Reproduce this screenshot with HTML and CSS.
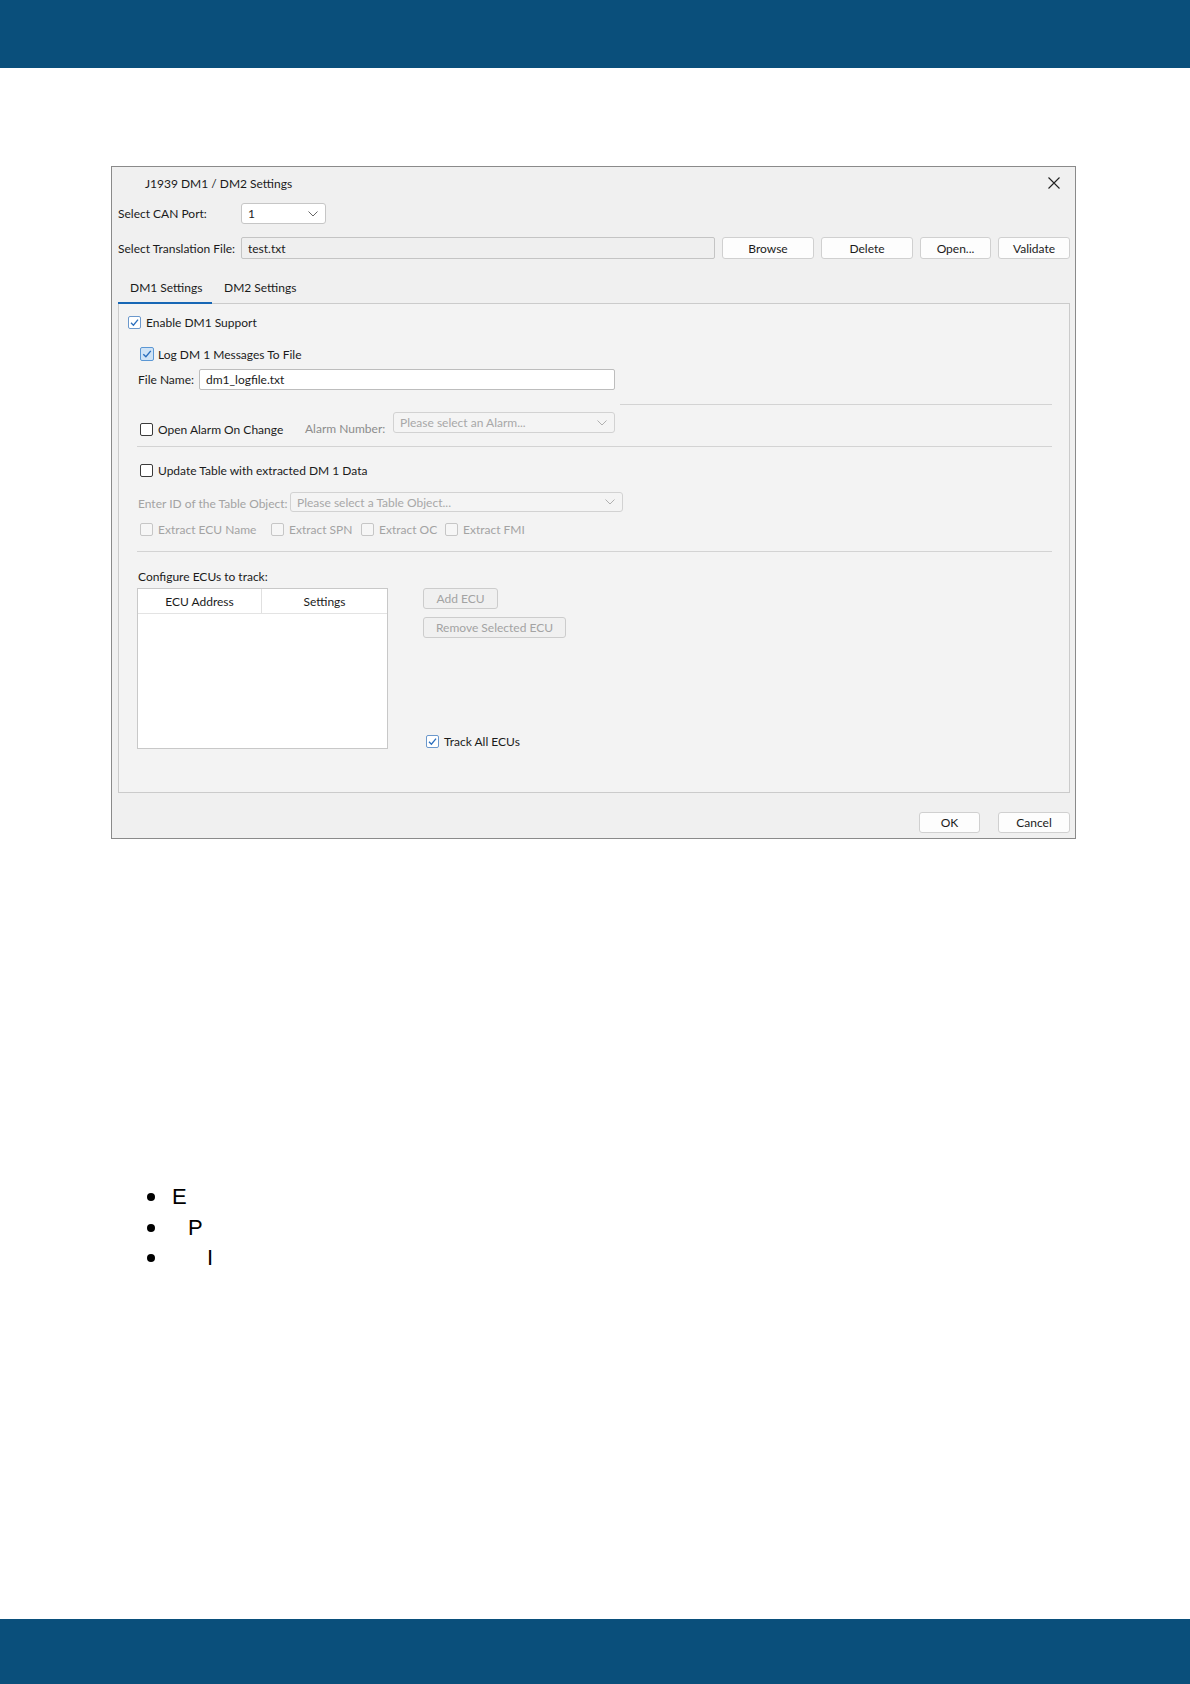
FILE: index.html
```html
<!DOCTYPE html>
<html>
<head>
<meta charset="utf-8">
<link rel="stylesheet" href="styles.css">
</head>
<body>
<div class="topbar"></div>
<div class="main">
  <div class="dialog">
    <div class="titlebar">
      <span class="title">J1939 DM1 / DM2 Settings</span>
      <svg class="close" width="12" height="12" viewBox="0 0 12 12"><path d="M0.5 0.5 L11.5 11.5 M11.5 0.5 L0.5 11.5" stroke="#222" stroke-width="1.1" fill="none"/></svg>
    </div>
    <div class="row row-port">
      <span class="lbl lbl-port">Select CAN Port:</span>
      <div class="select port"><span>1</span><svg class="chev" width="10" height="6" viewBox="0 0 10 6"><path d="M0.5 0.5 L5 5 L9.5 0.5" stroke="#666" stroke-width="1" fill="none"/></svg></div>
    </div>
    <div class="row row-file">
      <span class="lbl lbl-port">Select Translation File:</span>
      <div class="input ro">test.txt</div>
      <div class="btn w-browse">Browse</div>
      <div class="btn w-delete">Delete</div>
      <div class="btn w-open">Open...</div>
      <div class="btn w-validate">Validate</div>
    </div>
    <div class="tabs">
      <div class="tab active">DM1 Settings</div>
      <div class="tab">DM2 Settings</div>
    </div>
    <div class="panel">
      <div class="prow r-enable">
        <span class="cb on cb-enable"><svg viewBox="0 0 13 13"><path d="M3 6.8 L5.4 9.2 L10 3.6" stroke="#2a6ebd" stroke-width="1.3" fill="none"/></svg></span>
        <span class="cbl">Enable DM1 Support</span>
      </div>
      <div class="prow r-log">
        <span class="cb on focus"><svg viewBox="0 0 14 14"><path d="M3.3 7.2 L5.9 9.8 L10.8 3.9" stroke="#2a6ebd" stroke-width="1.4" fill="none"/></svg></span>
        <span class="cbl">Log DM 1 Messages To File</span>
      </div>
      <div class="prow r-file">
        <span class="lbl w-fname">File Name:</span>
        <div class="input wt w-finput">dm1_logfile.txt</div>
      </div>
      <div class="sep sep-part"></div>
      <div class="prow r-alarm">
        <div class="cbitem w-alarmcb"><span class="cb"></span><span class="cbl">Open Alarm On Change</span></div>
        <span class="lbl dim w-alarmlbl">Alarm Number:</span>
        <div class="select dis w-alarmsel"><span>Please select an Alarm...</span><svg class="chev" width="10" height="6" viewBox="0 0 10 6"><path d="M0.5 0.5 L5 5 L9.5 0.5" stroke="#b0b0b0" stroke-width="1" fill="none"/></svg></div>
      </div>
      <div class="sep sep-full"></div>
      <div class="prow r-update">
        <span class="cb"></span><span class="cbl">Update Table with extracted DM 1 Data</span>
      </div>
      <div class="prow r-enter">
        <span class="lbl dis-t w-enter">Enter ID of the Table Object:</span>
        <div class="select dis w-tablesel"><span>Please select a Table Object...</span><svg class="chev" width="10" height="6" viewBox="0 0 10 6"><path d="M0.5 0.5 L5 5 L9.5 0.5" stroke="#b0b0b0" stroke-width="1" fill="none"/></svg></div>
      </div>
      <div class="prow r-extract">
        <div class="cbitem w-x1"><span class="cb dis"></span><span class="cbl dis-t">Extract ECU Name</span></div>
        <div class="cbitem w-x2"><span class="cb dis"></span><span class="cbl dis-t">Extract SPN</span></div>
        <div class="cbitem w-x3"><span class="cb dis"></span><span class="cbl dis-t">Extract OC</span></div>
        <div class="cbitem"><span class="cb dis"></span><span class="cbl dis-t">Extract FMI</span></div>
      </div>
      <div class="sep sep-full sep3"></div>
      <div class="prow r-config"><span class="lbl">Configure ECUs to track:</span></div>
      <div class="ecu">
        <div class="table">
          <div class="thead">
            <div class="th th1">ECU Address</div>
            <div class="th th2">Settings</div>
          </div>
        </div>
        <div class="ecu-side">
          <div class="btn dis w-add">Add ECU</div>
          <div class="btn dis w-remove">Remove Selected ECU</div>
          <div class="prow r-track">
            <span class="cb on"><svg viewBox="0 0 13 13"><path d="M3 6.8 L5.4 9.2 L10 3.6" stroke="#2a6ebd" stroke-width="1.3" fill="none"/></svg></span>
            <span class="cbl">Track All ECUs</span>
          </div>
        </div>
      </div>
    </div>
    <div class="footbtns">
      <div class="btn w-ok">OK</div>
      <div class="btn w-cancel">Cancel</div>
    </div>
  </div>
  <ul class="bullets">
    <li class="bi"><span class="dot"></span><span class="bt t1">E</span></li>
    <li class="bi"><span class="dot"></span><span class="bt t2">P</span></li>
    <li class="bi"><span class="dot"></span><span class="bt t3">I</span></li>
  </ul>
</div>
<div class="bottombar"></div>
</body>
</html>
```
FILE: styles.css
```css
* { box-sizing: border-box; }
html, body { margin: 0; padding: 0; }
body {
  width: 1190px;
  height: 1684px;
  background: #fff;
  font-family: "Lato", "Segoe UI", sans-serif;
  font-size: 12px;
  color: #1b1b1b;
  display: flex;
  flex-direction: column;
  overflow: hidden;
}
.topbar { height: 68px; background: #0a4f7b; flex: none; }
.main { flex: 1; }
.bottombar { height: 65px; background: #0a4f7b; flex: none; }

.dialog {
  margin: 98px 0 0 111px;
  width: 965px;
  height: 673px;
  border: 1px solid #8a8a8a;
  background: #f0f0f0;
  padding: 0 5px 0 6px;
  display: flex;
  flex-direction: column;
}
.titlebar {
  height: 32px;
  display: flex;
  align-items: center;
  justify-content: space-between;
  padding-left: 27px;
  padding-right: 10px;
  flex: none;
}
.close { display: block; }

.row { display: flex; align-items: center; flex: none; }
.row-port { margin-top: 4px; height: 21px; }
.row-file { margin-top: 13px; height: 22px; gap: 7px; }
.lbl { white-space: nowrap; }
.lbl-port { width: 123px; flex: none; }
.row-file .lbl-port { width: 116px; }

.select {
  display: flex;
  align-items: center;
  justify-content: space-between;
  background: #fff;
  border: 1px solid #c6c6c6;
  border-radius: 3px;
  padding: 0 7px 0 6px;
  height: 21px;
  white-space: nowrap;
}
.select.port { width: 85px; }
.chev { display: block; }
.select.dis { background: #f4f4f4; border-color: #d2d2d2; color: #a8a8a8; }

.input {
  height: 22px;
  display: flex;
  align-items: center;
  padding: 0 6px;
  border: 1px solid #c4c4c4;
  border-radius: 2px;
}
.input.ro { flex: 1; background: #efefef; }
.input.wt { background: #fff; height: 21px; border-color: #bdbdbd; }

.btn {
  height: 22px;
  display: flex;
  align-items: center;
  justify-content: center;
  background: #fdfdfd;
  border: 1px solid #d0d0d0;
  border-radius: 3px;
  flex: none;
  white-space: nowrap;
}
.btn.dis { background: #f0f0f0; border-color: #cccccc; color: #a3a3a3; }
.w-browse { width: 92px; }
.w-delete { width: 92px; }
.w-open { width: 71px; }
.w-validate { width: 72px; }

.tabs {
  display: flex;
  margin-top: 14px;
  height: 31px;
  margin-bottom: -1px;
  position: relative;
  z-index: 1;
  flex: none;
}
.tab {
  height: 31px;
  line-height: 29px;
  padding: 0 12px;
  border-bottom: 2px solid transparent;
  white-space: nowrap;
}
.tab.active { width: 94px; padding-right: 0; border-bottom-color: #1767b5; }

.panel {
  height: 490px;
  border: 1px solid #cbcbcb;
  background: #f3f3f3;
  padding: 0 17px 0 19px;
  display: flex;
  flex-direction: column;
  flex: none;
}
.prow { display: flex; align-items: center; flex: none; }
.cb {
  width: 13px;
  height: 13px;
  border: 1px solid #3a3a3a;
  border-radius: 2px;
  background: #fff;
  flex: none;
  margin-left: 2px;
  position: relative;
}
.cb svg { position: absolute; left: -1px; top: -1px; width: 13px; height: 13px; }
.cb.on { border-color: #6b98cc; }
.cb.focus { width: 14px; height: 14px; background: #cfe3f6; border-color: #5b97d4; }
.cb.focus svg { width: 14px; height: 14px; }
.cb.dis { border-color: #c6c6c6; background: #f6f6f6; }
.cbl { margin-left: 5px; white-space: nowrap; }
.cb.focus + .cbl { margin-left: 4px; }
.cbitem { display: flex; align-items: center; flex: none; }
.dim { color: #8c8c8c; }
.dis-t { color: #a3a3a3; }

.r-enable { margin-top: 10px; height: 16px; }
.cb-enable { margin-left: -10px; }
.r-log { margin-top: 16px; height: 16px; }
.r-file { margin-top: 7px; height: 21px; }
.w-fname { width: 61px; flex: none; }
.w-finput { width: 416px; }
.sep { height: 1px; background: #d3d3d3; flex: none; }
.sep-part { margin-top: 14px; margin-left: 482px; }
.r-alarm { margin-top: 7px; height: 24px; align-items: flex-end; }
.r-alarm .cbitem { height: 14px; }
.w-alarmcb { width: 167px; }
.w-alarmlbl { width: 88px; flex: none; line-height: 14px; }
.w-alarmsel { width: 222px; align-self: flex-start; }
.sep-full { margin-top: 10px; margin-left: -1px; }
.r-update { margin-top: 15px; height: 16px; }
.r-enter { margin-top: 14px; height: 20px; }
.w-enter { width: 152px; flex: none; padding-top: 2px; }
.w-tablesel { width: 333px; height: 20px; }
.r-extract { margin-top: 10px; height: 14px; }
.w-x1 { width: 131px; }
.w-x2 { width: 90px; }
.w-x3 { width: 84px; }
.sep3 { margin-top: 15px; }
.r-config { margin-top: 17px; height: 14px; }

.ecu { display: flex; margin-top: 5px; height: 161px; flex: none; }
.table {
  width: 251px;
  height: 161px;
  margin-left: -1px;
  background: #fff;
  border: 1px solid #c8c8c8;
}
.thead { display: flex; height: 25px; border-bottom: 1px solid #e3e3e3; }
.th { display: flex; align-items: center; justify-content: center; }
.th1 { width: 124px; border-right: 1px solid #e0e0e0; }
.th2 { flex: 1; }
.ecu-side { margin-left: 35px; display: flex; flex-direction: column; align-items: flex-start; }
.w-add { width: 75px; height: 21px; }
.w-remove { width: 143px; height: 21px; margin-top: 8px; }
.r-track { margin-top: auto; margin-bottom: 1px; height: 14px; }
.r-track .cb { margin-left: 3px; }

.footbtns { display: flex; justify-content: flex-end; gap: 18px; margin-top: 19px; flex: none; }
.w-ok { width: 61px; height: 21px; }
.w-cancel { width: 72px; height: 21px; }

.bullets {
  list-style: none;
  margin: 343px 0 0 0;
  padding: 0;
  font-family: "Liberation Sans", Arial, sans-serif;
  font-size: 22px;
  color: #000;
}
.bi { display: flex; align-items: center; height: 30.5px; }
.dot { width: 8px; height: 8px; border-radius: 50%; background: #000; margin-left: 147px; flex: none; }
.bt { line-height: 30px; }
.t1 { margin-left: 17px; }
.t2 { margin-left: 33px; }
.t3 { margin-left: 52px; }
```
